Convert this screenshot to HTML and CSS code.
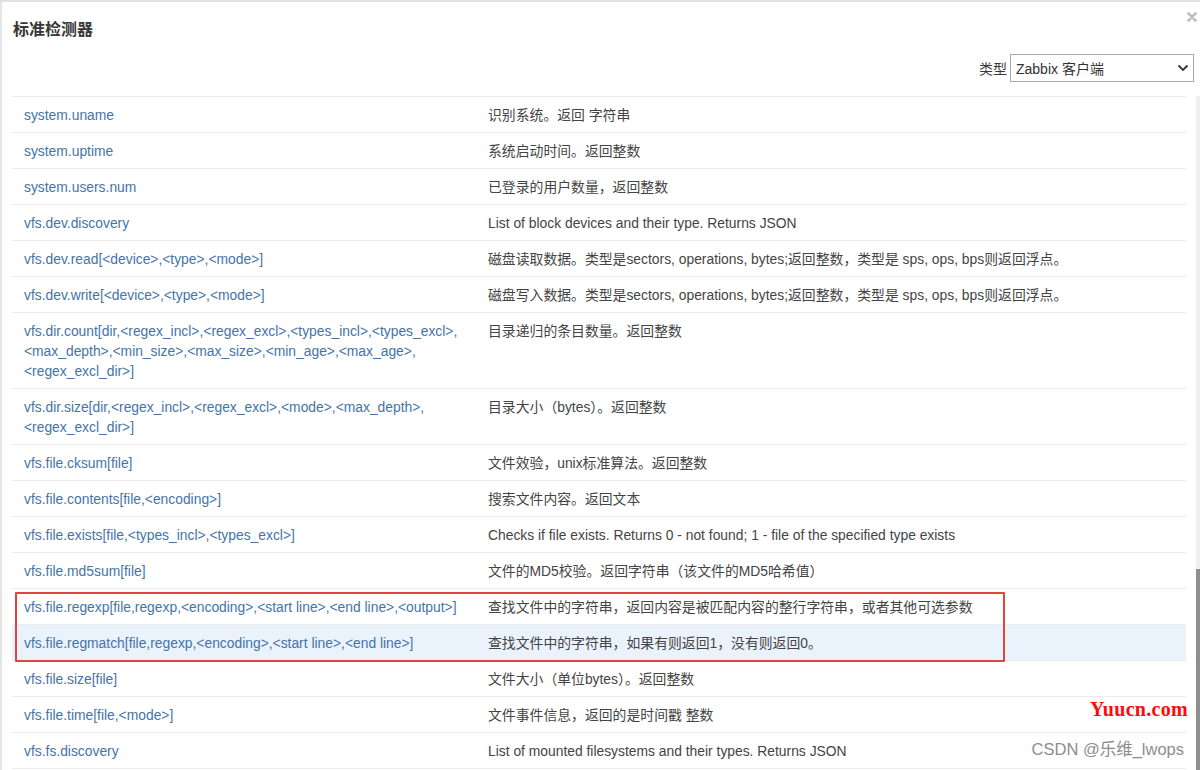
FILE: index.html
```html
<!DOCTYPE html>
<html lang="zh-CN">
<head>
<meta charset="utf-8">
<title>标准检测器</title>
<link rel="stylesheet" href="styles.css">
</head>
<body>
<div class="dialog">
  <div class="head">
    <h2 class="title">标准检测器</h2>
    <svg class="close" width="10" height="10" viewBox="0 0 10 10"><path d="M1.5 1.5 L8.5 8.5 M8.5 1.5 L1.5 8.5" stroke="#bdbdbd" stroke-width="2.6" stroke-linecap="round"/></svg>
  </div>
  <div class="toolbar">
    <span class="label">类型</span>
    <div class="select">
      <span>Zabbix 客户端</span>
      <svg width="12" height="8" viewBox="0 0 12 8"><polyline points="1.5,1.5 6,6 10.5,1.5" fill="none" stroke="#333" stroke-width="1.8"/></svg>
    </div>
  </div>
  <div class="body">
    <div class="tablewrap">
      <table class="list">
        <colgroup><col class="c1"><col class="c2"></colgroup>
        <tbody>
          <tr><td><a>system.uname</a></td><td>识别系统。返回 字符串</td></tr>
          <tr><td><a>system.uptime</a></td><td>系统启动时间。返回整数</td></tr>
          <tr><td><a>system.users.num</a></td><td>已登录的用户数量，返回整数</td></tr>
          <tr><td><a>vfs.dev.discovery</a></td><td>List of block devices and their type. Returns JSON</td></tr>
          <tr><td><a>vfs.dev.read[&lt;device&gt;,&lt;type&gt;,&lt;mode&gt;]</a></td><td>磁盘读取数据。类型是sectors, operations, bytes;返回整数，类型是 sps, ops, bps则返回浮点。</td></tr>
          <tr><td><a>vfs.dev.write[&lt;device&gt;,&lt;type&gt;,&lt;mode&gt;]</a></td><td>磁盘写入数据。类型是sectors, operations, bytes;返回整数，类型是 sps, ops, bps则返回浮点。</td></tr>
          <tr><td><a>vfs.dir.count[dir,&lt;regex_incl&gt;,&lt;regex_excl&gt;,&lt;types_incl&gt;,&lt;types_excl&gt;,<br>&lt;max_depth&gt;,&lt;min_size&gt;,&lt;max_size&gt;,&lt;min_age&gt;,&lt;max_age&gt;,<br>&lt;regex_excl_dir&gt;]</a></td><td>目录递归的条目数量。返回整数</td></tr>
          <tr><td><a>vfs.dir.size[dir,&lt;regex_incl&gt;,&lt;regex_excl&gt;,&lt;mode&gt;,&lt;max_depth&gt;,<br>&lt;regex_excl_dir&gt;]</a></td><td>目录大小（bytes）。返回整数</td></tr>
          <tr><td><a>vfs.file.cksum[file]</a></td><td>文件效验，unix标准算法。返回整数</td></tr>
          <tr><td><a>vfs.file.contents[file,&lt;encoding&gt;]</a></td><td>搜索文件内容。返回文本</td></tr>
          <tr><td><a>vfs.file.exists[file,&lt;types_incl&gt;,&lt;types_excl&gt;]</a></td><td>Checks if file exists. Returns 0 - not found; 1 - file of the specified type exists</td></tr>
          <tr><td><a>vfs.file.md5sum[file]</a></td><td>文件的MD5校验。返回字符串（该文件的MD5哈希值）</td></tr>
          <tr><td><a>vfs.file.regexp[file,regexp,&lt;encoding&gt;,&lt;start line&gt;,&lt;end line&gt;,&lt;output&gt;]</a></td><td>查找文件中的字符串，返回内容是被匹配内容的整行字符串，或者其他可选参数</td></tr>
          <tr class="hover"><td><a>vfs.file.regmatch[file,regexp,&lt;encoding&gt;,&lt;start line&gt;,&lt;end line&gt;]</a></td><td>查找文件中的字符串，如果有则返回1，没有则返回0。</td></tr>
          <tr><td><a>vfs.file.size[file]</a></td><td>文件大小（单位bytes）。返回整数</td></tr>
          <tr><td><a>vfs.file.time[file,&lt;mode&gt;]</a></td><td>文件事件信息，返回的是时间戳 整数</td></tr>
          <tr><td><a>vfs.fs.discovery</a></td><td>List of mounted filesystems and their types. Returns JSON</td></tr>
        </tbody>
      </table>
      <div class="redbox"></div>
      <div class="mark-yuucn">Yuucn.com</div>
      <div class="mark-csdn">CSDN @乐维_lwops</div>
    </div>
    <div class="scrollbar">
      <div class="track"></div>
      <div class="thumb"></div>
    </div>
  </div>
</div>
</body>
</html>
```

FILE: styles.css
```css
html, body {
  margin: 0;
  padding: 0;
  background: #ffffff;
}

body {
  font-family: "Liberation Sans", Arial, "Noto Sans CJK SC", sans-serif;
  font-size: 14px;
  color: #404040;
}

.dialog {
  height: 768px;
  border-top: 2px solid #e1e1e1;
  border-left: 2px solid #e4e4e4;
  display: flex;
  flex-direction: column;
  overflow: hidden;
}

.head {
  position: relative;
  padding: 16px 0 0 11px;
}

.title {
  margin: 0;
  font-size: 16px;
  line-height: 20px;
  font-weight: bold;
  color: #383838;
  font-family: "Noto Sans CJK SC", sans-serif;
}

.close {
  position: absolute;
  top: 10px;
  right: 3px;
}

.toolbar {
  display: flex;
  justify-content: flex-end;
  align-items: center;
  gap: 3px;
  margin-top: 16px;
  padding-right: 6px;
}

.label {
  font-family: "Noto Sans CJK SC", sans-serif;
  font-size: 14px;
  color: #3a3a3a;
}

.select {
  height: 26px;
  border: 1px solid #a9a9a9;
  display: flex;
  align-items: center;
  justify-content: space-between;
  padding: 0 4px 0 5px;
  box-sizing: content-box;
  width: 173px;
  font-size: 14px;
  color: #333;
}

.body {
  display: flex;
  flex: 1;
  margin-top: 14px;
  min-height: 0;
}

.tablewrap {
  position: relative;
  flex: 1;
  padding-left: 10px;
  padding-right: 10px;
}

.list {
  width: 100%;
  border-collapse: collapse;
  table-layout: fixed;
  border-top: 1px solid #ececec;
  font-size: 13.85px;
}

.c1 { width: 464px; }

.list td {
  padding: 8px 12px 7px 12px;
  line-height: 20px;
  vertical-align: top;
  border-bottom: 1px solid #ececec;
  white-space: nowrap;
}

.list a {
  color: #4574a8;
  text-decoration: none;
}

.list td:nth-child(2) {
  color: #444444;
}

.list tr.hover td {
  background: #eaf2fb;
}

.redbox {
  position: absolute;
  left: 13px;
  top: 496px;
  width: 986px;
  height: 66px;
  border: 2px solid #e0453b;
  border-radius: 1px;
  pointer-events: none;
}

.mark-yuucn {
  position: absolute;
  right: 8px;
  top: 602px;
  font-family: "Liberation Serif", "Times New Roman", serif;
  font-weight: bold;
  font-size: 20px;
  letter-spacing: 0.3px;
  color: #ff0a0a;
}

.mark-csdn {
  position: absolute;
  right: 12px;
  top: 640px;
  font-family: "Liberation Sans", "Noto Sans CJK SC", sans-serif;
  font-size: 16.5px;
  color: #8d8d8d;
}

.scrollbar {
  width: 4px;
  display: flex;
  flex-direction: column;
}

.track {
  height: 473px;
  background: #f0f0f0;
}

.thumb {
  flex: 1;
  background: #8f8f8f;
}
```
